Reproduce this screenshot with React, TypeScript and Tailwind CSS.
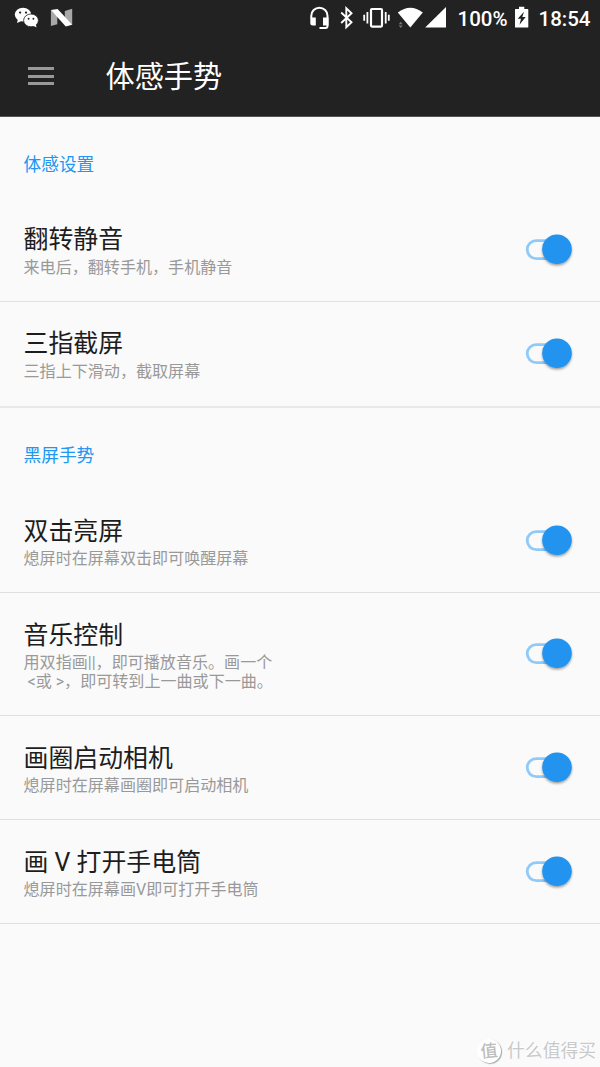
import React from "react";

type Item = { title: string; lines: string[]; box: string; gap: string; toggle: string };

const motion: Item[] = [
  {
    title: "翻转静音",
    lines: ["来电后，翻转手机，手机静音"],
    box: "h-[105px] pt-[28px] border-b border-[#e0e0e0]",
    gap: "mt-[2.5px]",
    toggle: "mt-[3px]",
  },
  {
    title: "三指截屏",
    lines: ["三指上下滑动，截取屏幕"],
    box: "h-[106px] pt-[27px] border-b-2 border-[#e9e9e9]",
    gap: "mt-[2.5px]",
    toggle: "mt-[3px]",
  },
];

const screenOff: Item[] = [
  {
    title: "双击亮屏",
    lines: ["熄屏时在屏幕双击即可唤醒屏幕"],
    box: "h-[105px] pt-[29px] border-b border-[#e0e0e0]",
    gap: "mt-[1.5px]",
    toggle: "mt-[2px]",
  },
  {
    title: "音乐控制",
    lines: ["用双指画||，即可播放音乐。画一个", " <或 >，即可转到上一曲或下一曲。"],
    box: "h-[123px] pt-[28px] border-b border-[#e0e0e0]",
    gap: "mt-[1.5px]",
    toggle: "mt-[11px]",
  },
  {
    title: "画圈启动相机",
    lines: ["熄屏时在屏幕画圈即可启动相机"],
    box: "h-[104px] pt-[28px] border-b border-[#e0e0e0]",
    gap: "mt-[1.5px]",
    toggle: "mt-[2px]",
  },
  {
    title: "画 V 打开手电筒",
    lines: ["熄屏时在屏幕画V即可打开手电筒"],
    box: "h-[104px] pt-[28px] border-b border-[#e0e0e0]",
    gap: "mt-[1.5px]",
    toggle: "mt-[2px]",
  },
];

function Toggle() {
  return (
    <svg width="60" height="44" viewBox="0 0 60 44" className="shrink-0">
      <defs>
        <filter id="knob" x="-30%" y="-30%" width="160%" height="170%">
          <feDropShadow dx="0" dy="1.5" stdDeviation="1.2" floodColor="#000" floodOpacity="0.38" />
        </filter>
      </defs>
      <rect x="13.2" y="12.6" width="36" height="18" rx="9" fill="none" stroke="#90caf9" strokeWidth="2.8" />
      <circle cx="43" cy="21.3" r="14.8" fill="#2093ee" filter="url(#knob)" />
    </svg>
  );
}

function Row({ item }: { item: Item }) {
  return (
    <li className={"flex justify-between pl-[23.5px] pr-[26px] " + item.box}>
      <div>
        <h2 className="text-[24.9px] leading-[30px] text-[#1d1d1d]">{item.title}</h2>
        <div className={"text-[16.07px] leading-[19px] text-[#999999] " + item.gap}>
          {item.lines.map((line) => (
            <p key={line} className="whitespace-pre">{line}</p>
          ))}
        </div>
      </div>
      <div className={item.toggle}>
        <Toggle />
      </div>
    </li>
  );
}

function Section({ label, items }: { label: string; items: Item[] }) {
  return (
    <section>
      <h3 className="h-20 pl-[23.5px] pt-9 text-[17.7px] leading-6 text-[#2196f3]">{label}</h3>
      <ul>
        {items.map((item) => (
          <Row key={item.title} item={item} />
        ))}
      </ul>
    </section>
  );
}

function StatusBar() {
  return (
    <div className="relative h-9 text-white">
      <svg width="600" height="36" viewBox="0 0 600 36" className="block" fill="#fff">
        <ellipse cx="23" cy="14.6" rx="8.2" ry="6.9" />
        <path d="M18 19l-1 4 4.5-2z" />
        <circle cx="20.1" cy="12.6" r="1.15" fill="#222" />
        <circle cx="26" cy="12.6" r="1.15" fill="#222" />
        <ellipse cx="31" cy="20.4" rx="7.4" ry="6.4" stroke="#222" strokeWidth="0.8" />
        <path d="M33 25.5l3.5 2-.7-3.5z" />
        <circle cx="28.6" cy="18.8" r="0.95" fill="#222" />
        <circle cx="33.4" cy="18.8" r="0.95" fill="#222" />
        <path d="M50.9 10L57.3 16V24.2L50.9 26.1zM64.8 11L72.2 8.8V25L64.8 18z" fill="#a8a8a8" />
        <path d="M50.9 10L57.6 8.9 72.2 24.7 65.8 26.4z" />

        <path d="M311.3 18v-2.2a8.1 8.1 0 0 1 16.2 0V26q0 2-2 2H319.5" fill="none" stroke="#fff" strokeWidth="2" />
        <path d="M310.3 17.5h5.5v8h-3q-2.5 0-2.5-2.5zM323 17.5h5.5v8H323z" />
        <path d="M341.2 12.5l10.3 9.8-5.2 4.9V8.3l5.2 4.9-10.3 9.8" fill="none" stroke="#fff" strokeWidth="1.9" />
        <rect x="371" y="9" width="11" height="17.6" rx="1" fill="none" stroke="#fff" strokeWidth="2.2" />
        <path d="M367.4 12v11.5M364.2 14.7v6M385.7 12v11.5M388.8 14.7v6" stroke="#fff" strokeWidth="1.8" fill="none" />
        <path d="M397.8 12.5Q410.3 3 422.8 12.5L410.3 27.5z" />
        <path d="M398.7 24.2l2-2.5 2 2.5zM398.7 25.5h4l-2 2.5z" fill="#777" />
        <path d="M446 7v20.5h-20.8z" />
        <path d="M519 6.8h5.3v2.1h3.5q.5 0 .5.6V27q0 .6-.6.6h-12.1q-.6 0-.6-.6V9.5q0-.6.6-.6h3.4z" />
        <path d="M524 11.8l-6.3 7h3.3l-1.5 6 6.2-7.9h-3.4z" fill="#222" />
      </svg>
      <span className="absolute left-[457.5px] top-[7px] text-[20.5px] font-medium leading-6">100%</span>
      <span className="absolute left-[538.5px] top-[7px] text-[20.5px] font-medium leading-6">18:54</span>
    </div>
  );
}

export default function App() {
  return (
    <div className="relative h-[1067px] w-[600px] overflow-hidden bg-[#fafafa] font-[Roboto,'Noto_Sans_CJK_SC',sans-serif]">
      <header className="h-[117px] border-b border-[#555] bg-[#222222]">
        <StatusBar />
        <div className="flex h-20 items-center pl-[27.5px]">
          <div className="flex w-[26.5px] flex-col gap-[4.5px]">
            <span className="h-[3px] bg-[#999]" />
            <span className="h-[3px] bg-[#999]" />
            <span className="h-[3px] bg-[#999]" />
          </div>
          <h1 className="ml-[51.5px] mt-px text-[29.2px] leading-10 text-white">体感手势</h1>
        </div>
      </header>
      <main>
        <Section label="体感设置" items={motion} />
        <Section label="黑屏手势" items={screenOff} />
      </main>
      <div className="absolute bottom-[2px] right-[4px] flex items-center gap-[6px] text-[#c9c9c9] [text-shadow:-1px_-1px_0_#fff]">
        <span className="flex size-6 -rotate-6 items-center justify-center rounded-full bg-white text-[17px] font-medium leading-none text-[#bdbdbd] shadow-[1px_1px_1px_#aaa]">值</span>
        <span className="text-[17.8px] leading-7">什么值得买</span>
      </div>
    </div>
  );
}
